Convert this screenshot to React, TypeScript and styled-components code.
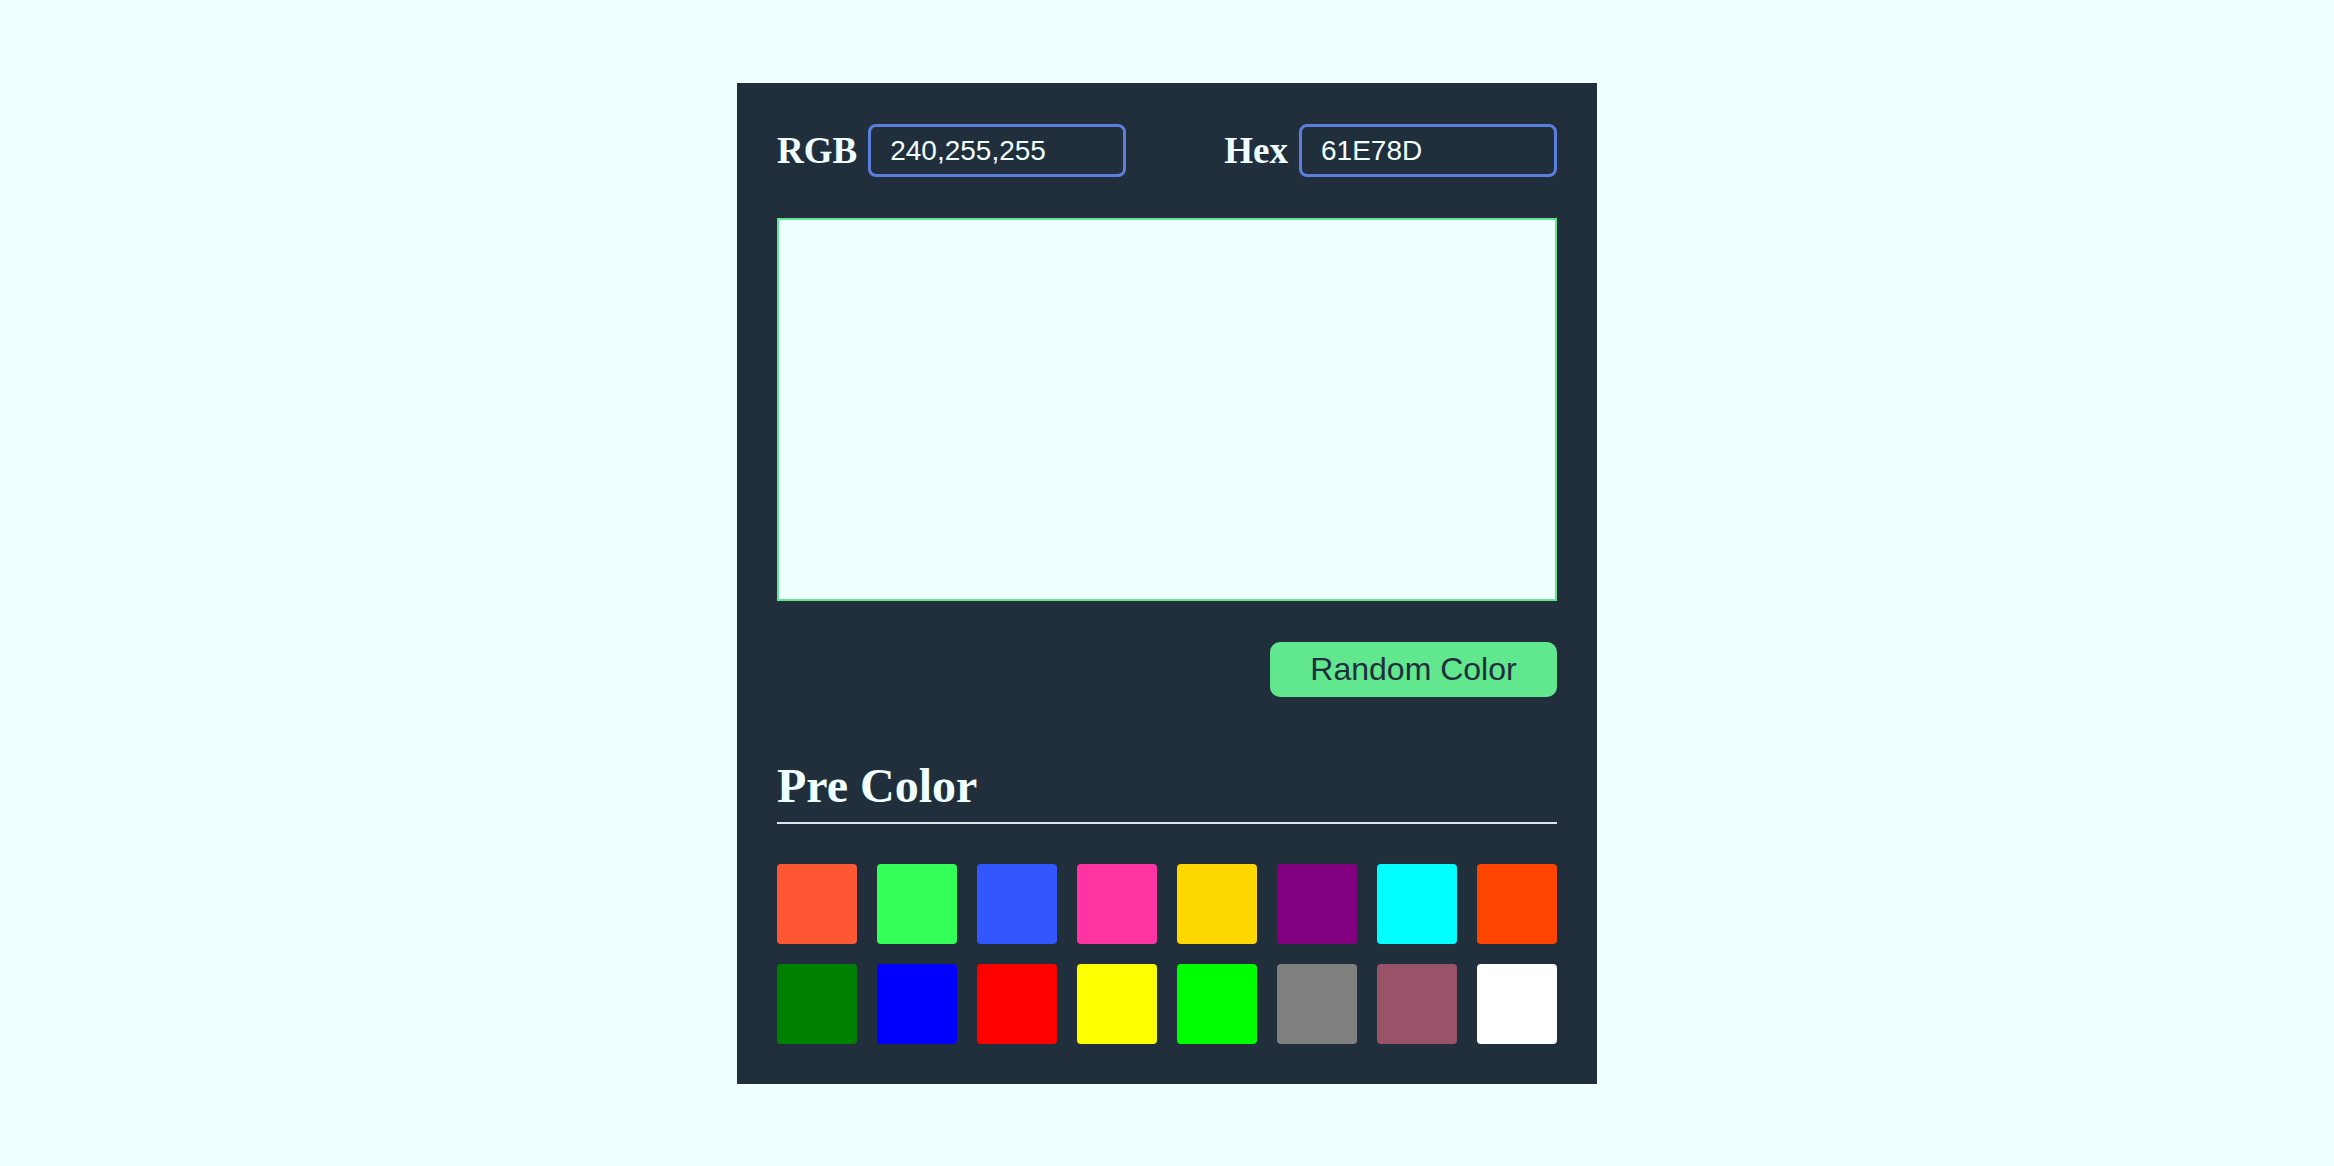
import React, { useState } from "react";
import styled, { createGlobalStyle } from "styled-components";

const GlobalStyle = createGlobalStyle`
  * {
    box-sizing: border-box;
  }

  body {
    margin: 0;
    background-color: #f0ffff;
    font-family: "Liberation Serif", "Times New Roman", serif;
  }
`;

const Page = styled.div`
  display: flex;
  justify-content: center;
  align-items: flex-start;
  padding-top: 83px;
  min-height: 1166px;
`;

const Panel = styled.div`
  width: 860px;
  padding: 41px 40px 40px 40px;
  background-color: #212f3d;
  display: flex;
  flex-direction: column;
`;

const TopRow = styled.div`
  display: flex;
  justify-content: space-between;
  align-items: center;
`;

const Field = styled.div`
  display: flex;
  align-items: center;
  gap: 11px;
`;

const Label = styled.label`
  font-family: "Liberation Serif", "Times New Roman", serif;
  font-weight: bold;
  font-size: 37px;
  color: #f0ffff;
`;

const ValueInput = styled.input`
  width: 258px;
  height: 53px;
  padding: 0 19px;
  border: 3px solid #5b7fdd;
  border-radius: 8px;
  background-color: transparent;
  color: #f0ffff;
  font-family: "Liberation Sans", Arial, sans-serif;
  font-size: 28px;
  outline: none;
`;

const Preview = styled.div<{ $color: string }>`
  margin-top: 41px;
  height: 383px;
  border: 2px solid #61e78d;
  background-color: ${(props) => props.$color};
`;

const ButtonRow = styled.div`
  display: flex;
  justify-content: flex-end;
  margin-top: 41px;
`;

const RandomButton = styled.button`
  width: 287px;
  height: 55px;
  border: none;
  border-radius: 10px;
  background-color: #61e78d;
  color: #212f3d;
  font-family: "Liberation Sans", Arial, sans-serif;
  font-size: 32px;
  cursor: pointer;
`;

const Heading = styled.h2`
  margin: 61px 0 0 0;
  padding-bottom: 9px;
  border-bottom: 2px solid #dfe6ea;
  font-family: "Liberation Serif", "Times New Roman", serif;
  font-weight: bold;
  font-size: 48px;
  line-height: normal;
  color: #f0ffff;
`;

const SwatchGrid = styled.div`
  margin-top: 40px;
  display: grid;
  grid-template-columns: repeat(8, 80px);
  grid-auto-rows: 80px;
  gap: 20px;
`;

const Swatch = styled.div<{ $color: string }>`
  border-radius: 4px;
  background-color: ${(props) => props.$color};
  cursor: pointer;
`;

const PRESETS = [
  "#ff5733",
  "#33ff57",
  "#3357ff",
  "#ff33a1",
  "#ffd700",
  "#800080",
  "#00ffff",
  "#ff4500",
  "#008000",
  "#0000ff",
  "#ff0000",
  "#ffff00",
  "#00ff00",
  "#808080",
  "#985368",
  "#ffffff",
];

export default function App() {
  const [rgb, setRgb] = useState("240,255,255");
  const [hex, setHex] = useState("61E78D");

  return (
    <>
      <GlobalStyle />
      <Page>
        <Panel>
          <TopRow>
            <Field>
              <Label>RGB</Label>
              <ValueInput value={rgb} onChange={(e) => setRgb(e.target.value)} />
            </Field>
            <Field>
              <Label>Hex</Label>
              <ValueInput value={hex} onChange={(e) => setHex(e.target.value)} />
            </Field>
          </TopRow>

          <Preview $color={`rgb(${rgb})`} />

          <ButtonRow>
            <RandomButton>Random Color</RandomButton>
          </ButtonRow>

          <Heading>Pre Color</Heading>

          <SwatchGrid>
            {PRESETS.map((c, i) => (
              <Swatch key={i} $color={c} />
            ))}
          </SwatchGrid>
        </Panel>
      </Page>
    </>
  );
}
